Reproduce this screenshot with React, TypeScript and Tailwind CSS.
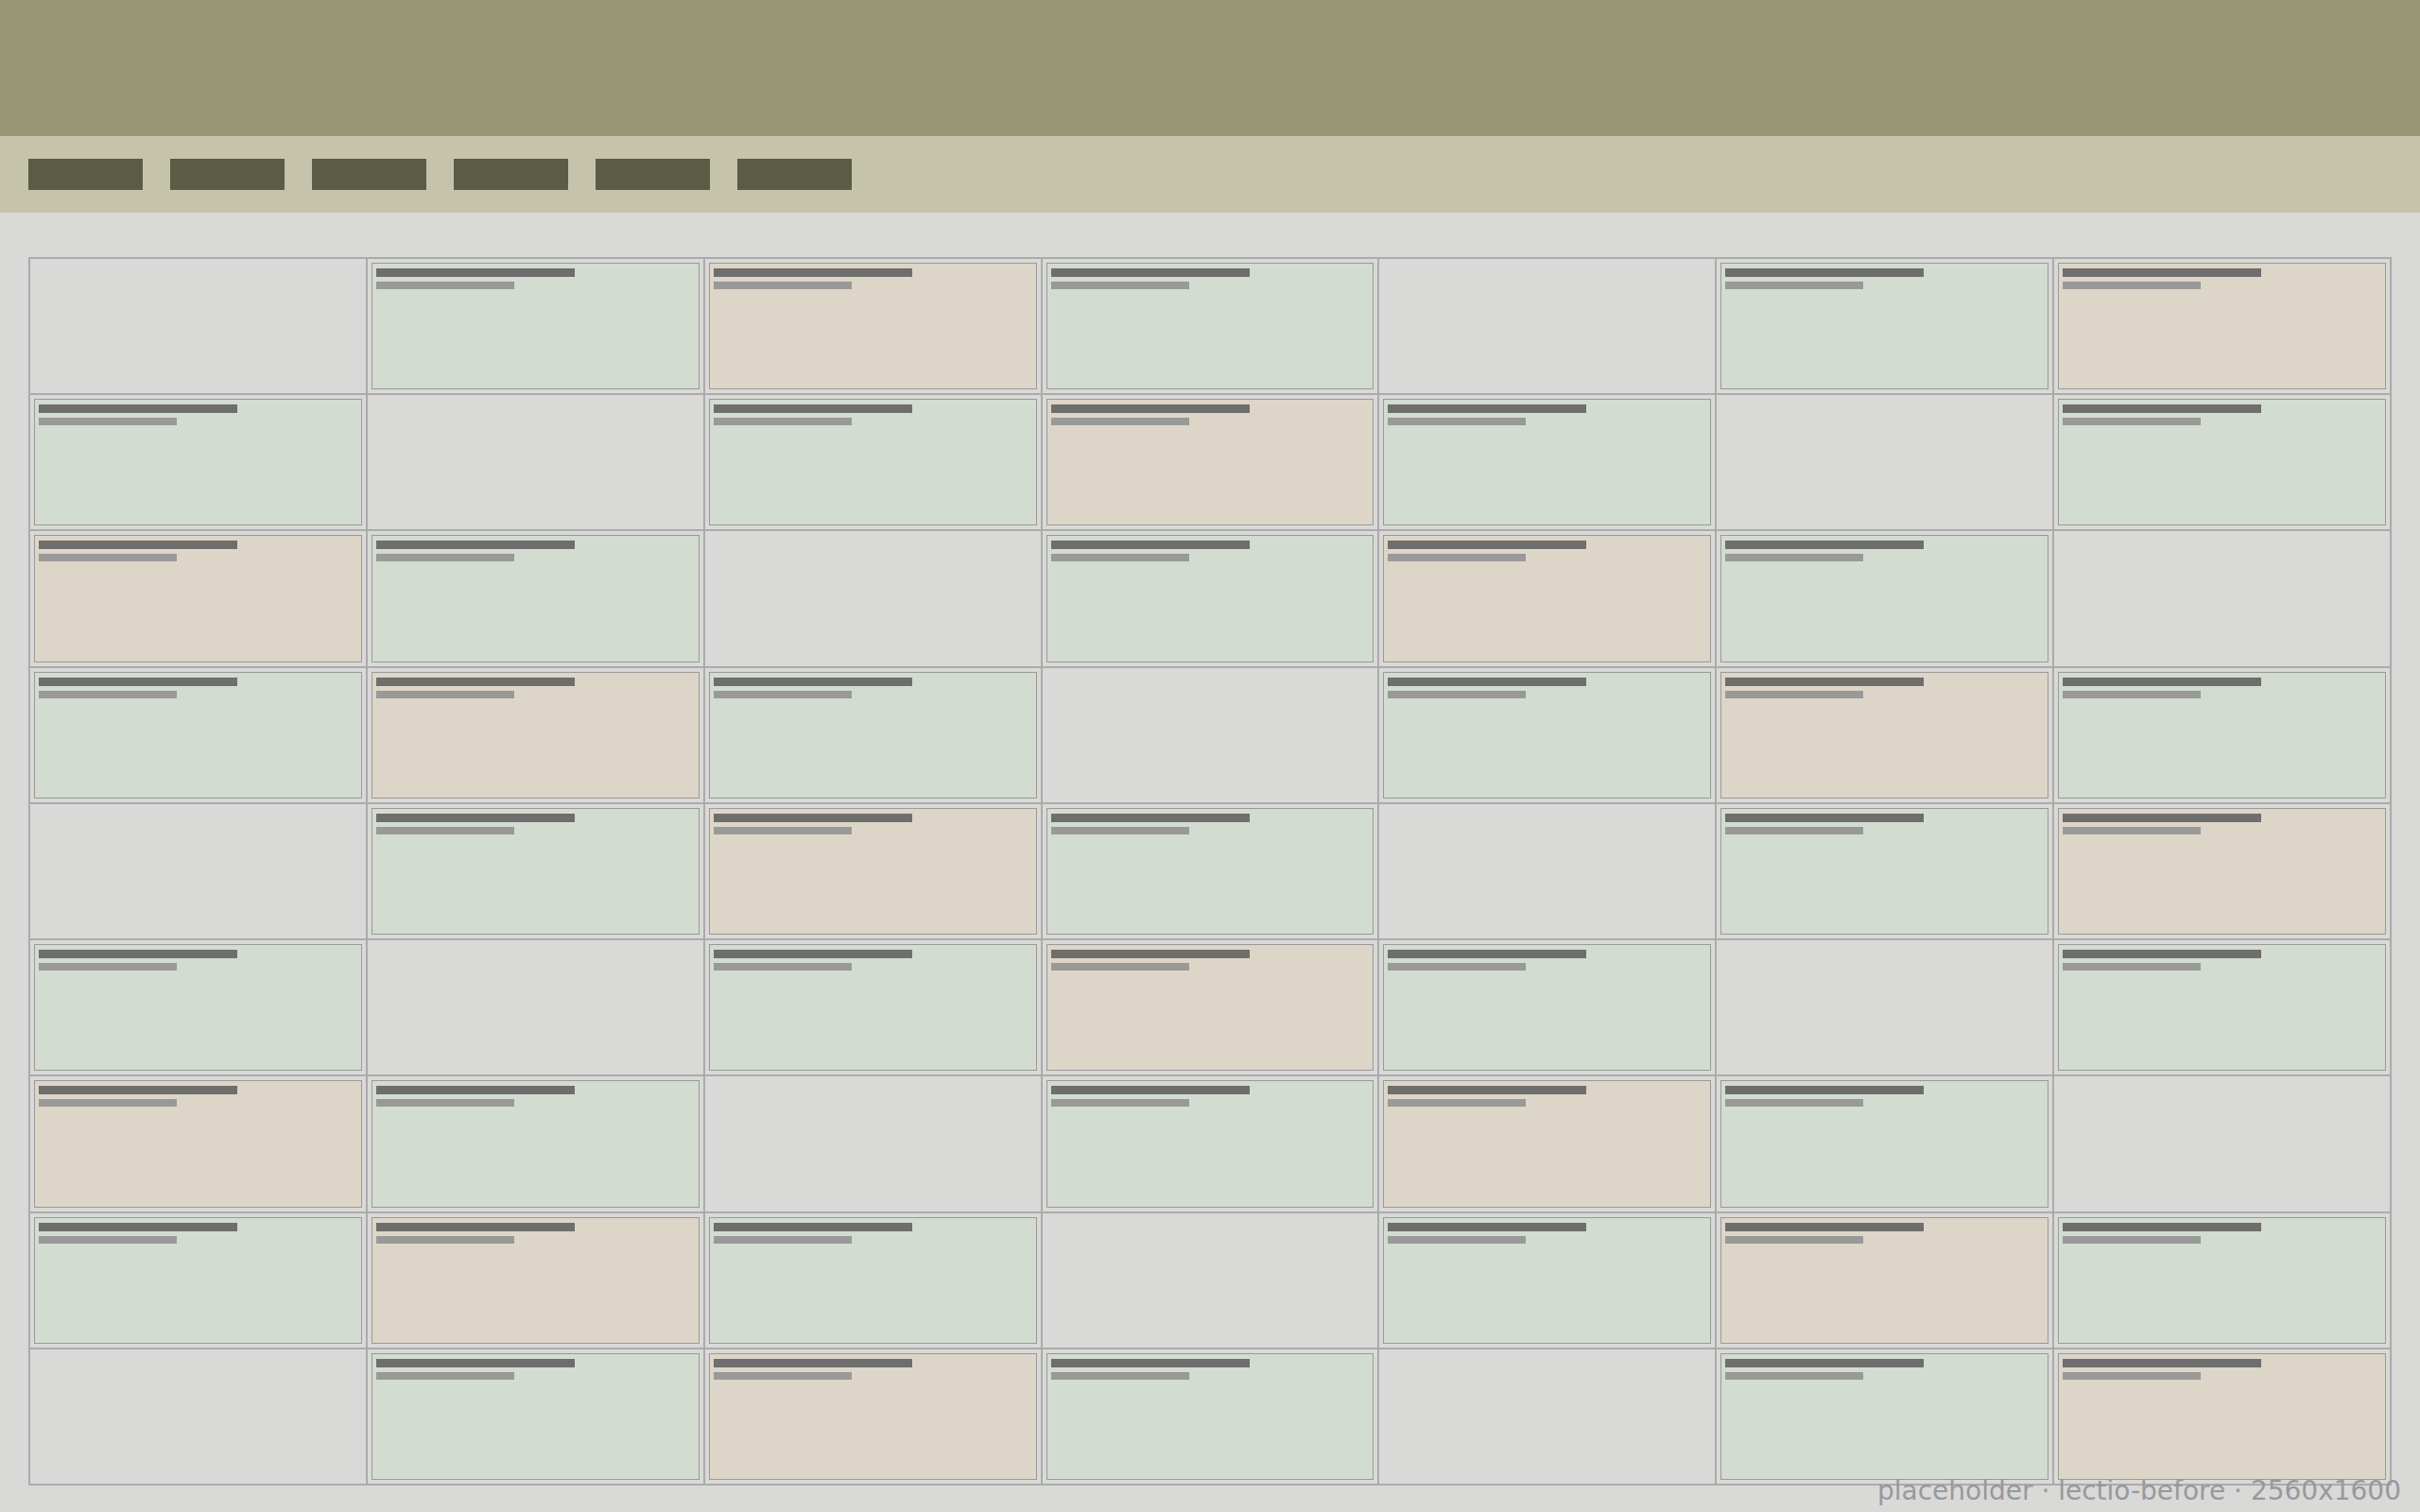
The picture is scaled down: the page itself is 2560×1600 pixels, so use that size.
import React from "react";

// Board layout: title band, tab strip, and a 7x9 slot grid with tinted cards.
const COLS = 7;
const ROWS = 9;

type Slot = "empty" | "green" | "sand";

function slotKind(i: number): Slot {
  const m = i % 4;
  if (m === 0) return "empty";
  if (m === 2) return "sand";
  return "green";
}

function Card({ kind }: { kind: Exclude<Slot, "empty"> }) {
  const tint = kind === "green" ? "bg-[#d2dcd0]" : "bg-[#ddd5c8]";
  return (
    <div className={`h-full w-full border border-[#9a9a98] ${tint} pt-[5px] px-[4px] flex flex-col gap-[5px]`}>
      <div className="h-[9px] w-[210px] bg-[#6e6e6c]" />
      <div className="h-[8px] w-[146px] bg-[#999997]" />
    </div>
  );
}

export default function App() {
  const slots = Array.from({ length: COLS * ROWS }, (_, i) => slotKind(i));
  const tabs = [0, 1, 2, 3, 4, 5];

  return (
    <div className="relative h-[1600px] w-[2560px] overflow-hidden bg-[#d9d9d7] flex flex-col">
      <header className="h-[144px] shrink-0 bg-[#979778]" />
      <nav className="h-[81px] shrink-0 bg-[#c5c4aa] px-[30px] flex items-center gap-[29px]">
        {tabs.map((t) => (
          <div key={t} className="h-[33px] w-[121px] bg-[#5b5b46]" />
        ))}
      </nav>
      <main className="pt-[47px] px-[30px]">
        <div className="grid h-[1300px] grid-cols-7 grid-rows-9 border border-[#ababab]">
          {slots.map((kind, i) => (
            <div key={i} className="border border-[#ababab] p-[4px] min-h-0 min-w-0">
              {kind !== "empty" && <Card kind={kind} />}
            </div>
          ))}
        </div>
      </main>
      <div className="absolute bottom-[1px] right-5 text-[28px] leading-normal text-[#98989e] font-['DejaVu_Sans',sans-serif] whitespace-nowrap">
        placeholder · lectio-before · 2560x1600
      </div>
    </div>
  );
}
